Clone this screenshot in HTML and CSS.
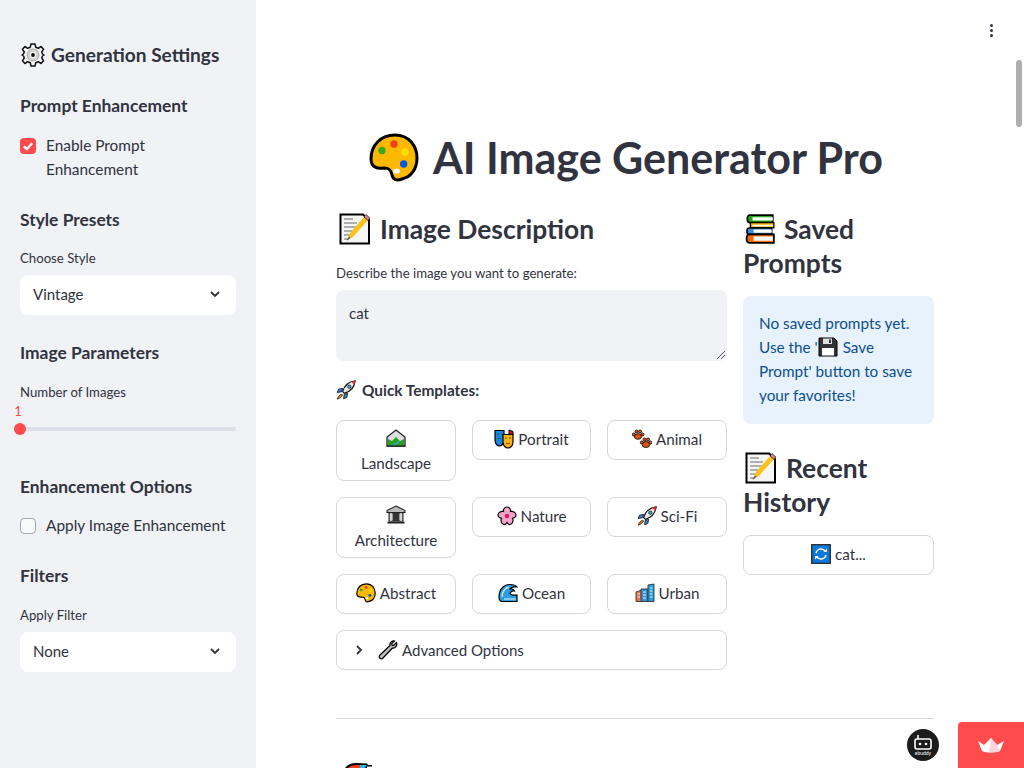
FILE: index.html
```html
<!DOCTYPE html>
<html lang="en">
<head>
<meta charset="utf-8">
<title>AI Image Generator Pro</title>
<link rel="stylesheet" href="styles.css">
</head>
<body>
<svg class="defs" width="0" height="0" aria-hidden="true">
  <symbol id="palette" viewBox="0 0 50 50">
    <path d="M2 26C2 12 12 2 26 2C40 2 48 13 48 25C48 36 42 44 33 46C28 48 24 47 23 42C22 37 20 35 15 35C8 36 2 34 2 26Z" fill="#fcb900" stroke="#000" stroke-width="3"/>
    <circle cx="25" cy="11" r="3.7" fill="#f0401a"/><circle cx="13" cy="17.5" r="3.7" fill="#3aaa1c"/><circle cx="36" cy="19" r="3.7" fill="#ffdc00"/><circle cx="34.7" cy="31" r="3.7" fill="#0a55e0"/>
    <ellipse cx="27.5" cy="38" rx="3.4" ry="2.6" fill="#fff"/>
  </symbol>
  <symbol id="memo" viewBox="0 0 32 32">
    <path d="M1.5 1.5H24L30 7V30.500H1.500Z" fill="#f6f6f6" stroke="#000" stroke-width="2"/>
    <path d="M5 6H14M5 10H18M5 14H17M5 18H13M5 22H10M5 26H8" stroke="#999" stroke-width="1.300"/>
    <path d="M8 27L11 20L25 4L29 7L14 24Z" fill="#fcc21b"/>
    <path d="M25 4L27 1.500L31 5L29 7.500Z" fill="#d9808a" stroke="#222" stroke-width=".7"/>
    <path d="M8 27L11 24" stroke="#555" stroke-width="1.500"/>
  </symbol>
  <symbol id="books" viewBox="0 0 30 30">
    <path d="M5 2H27V9H5C2.500 9 2.500 2 5 2Z" fill="#2da51a" stroke="#000" stroke-width="1.600"/><path d="M8 4H27V7H8Z" fill="#fff"/>
    <path d="M6 9H28V14H6Z" fill="#f4b400" stroke="#000" stroke-width="1.200"/><path d="M8 11H27V12.500H8Z" fill="#fff"/>
    <path d="M5 14H26V20H5C2 20 2 14 5 14Z" fill="#3c90d8" stroke="#000" stroke-width="1.400"/><path d="M9 15.500H26V18.500H9Z" fill="#fff"/>
    <path d="M5 20H28V28H5C1.500 28 1.500 20 5 20Z" fill="#f26a0c" stroke="#000" stroke-width="1.600"/><path d="M9 22H27V26H9Z" fill="#fff"/>
  </symbol>
  <symbol id="rocket" viewBox="0 0 24 24">
    <path d="M8 14C10 7 15 2 23 1C22 9 17 14 10 16Z" fill="#e8e8e8" stroke="#000" stroke-width="1.300"/>
    <path d="M18 1.700L23 1L22.300 6Z" fill="#e0251b"/>
    <circle cx="16" cy="8" r="2" fill="#4aa3df" stroke="#000" stroke-width=".8"/>
    <path d="M8 10L3 11L1.500 15L7 14ZM14 16L13 21L9 22.500L10 17Z" fill="#3f7fd0" stroke="#000" stroke-width=".9"/>
    <path d="M7 17C4 18 2.500 20 1.500 23C4.500 22 6.500 20.500 8 18Z" fill="#f57c00" stroke="#000" stroke-width=".8"/>
  </symbol>
  <symbol id="landscape" viewBox="0 0 20 20">
    <path d="M1 18V9L10 2L19 9V18Z" fill="#ddd" stroke="#222" stroke-width="1.300"/>
    <path d="M2 18V11L6 13L10 9L14 13L18 11V18Z" fill="#27a51e"/>
    <path d="M7 18C9 15 12 16 13 13" stroke="#38a6e0" stroke-width="1.600" fill="none"/>
    <path d="M1 18H19" stroke="#222" stroke-width="1.300"/>
  </symbol>
  <symbol id="masks" viewBox="0 0 20 20">
    <path d="M1 1.500H10V11C10 15 7 17 5.500 17C3.500 17 1 15 1 11Z" fill="#1d86e0" stroke="#000" stroke-width="1.200"/>
    <path d="M15 1L19 2.500V6H15Z" fill="#c2122f" stroke="#000"/>
    <path d="M9 5.500H19V13C19 16.500 16.500 19 14 19C11.500 19 9 16.500 9 13Z" fill="#f6b21a" stroke="#000" stroke-width="1.200"/>
    <path d="M11 9H13M15 9H17M12 14C13 15 15 15 16 14" stroke="#8a4a00" fill="none"/>
    <path d="M3 5H5M6.500 5H8.500M3.500 10C5 9 6 9 7.500 10" stroke="#063" fill="none" stroke-width=".8"/>
  </symbol>
  <symbol id="paws" viewBox="0 0 20 20">
    <g fill="#e0540c" stroke="#000" stroke-width=".8">
      <ellipse cx="6" cy="7.500" rx="3.600" ry="2.800"/><circle cx="1.800" cy="5.500" r="1.500"/><circle cx="4.500" cy="2.500" r="1.500"/><circle cx="8" cy="2.500" r="1.500"/><circle cx="10.500" cy="5.500" r="1.500"/>
      <ellipse cx="14" cy="15.500" rx="3.800" ry="3"/><circle cx="9.800" cy="13.500" r="1.500"/><circle cx="12.500" cy="10.500" r="1.500"/><circle cx="16" cy="10.500" r="1.500"/><circle cx="18.400" cy="13.500" r="1.500"/>
    </g>
  </symbol>
  <symbol id="bank" viewBox="0 0 20 20">
    <path d="M10 1L19 5.500V7.500H1V5.500Z" fill="#bbb" stroke="#222" stroke-width="1.100"/>
    <path d="M3 8H17V16H3Z" fill="#999" stroke="#222"/>
    <path d="M7 8H13V16H7Z" fill="#333"/>
    <path d="M5 8V16M15 8V16" stroke="#eee" stroke-width="1.400"/>
    <path d="M1.500 17.500H18.500" stroke="#222" stroke-width="2"/>
  </symbol>
  <symbol id="blossom" viewBox="0 0 20 20">
    <path d="M10 1C13 1 14 4 13.500 5.500C15.500 5 19 6 19 9C19 11.500 17 12 15.500 12.300C16.500 14 16 18 13 18.500C11.500 18.700 10.500 17.500 10 16.500C9.500 17.500 8.500 18.700 7 18.500C4 18 3.500 14 4.500 12.300C3 12 1 11.500 1 9C1 6 4.500 5 6.500 5.500C6 4 7 1 10 1Z" fill="#f6a5c8" stroke="#000" stroke-width="1.200"/>
    <circle cx="10" cy="10" r="2.200" fill="#d81b60"/>
  </symbol>
  <symbol id="wave" viewBox="0 0 20 20">
    <path d="M1 14C1 6 6 1.500 12 1.500C15 1.500 18 2.500 19 4C16 3.500 13 4 12 6C14 5.500 16 6.500 16.500 8C15 7.500 13 8.500 12 10C12 12 15 12.500 19 12V18.500H4C2 18.500 1 16.500 1 14Z" fill="#2f9ce0" stroke="#000" stroke-width="1.200"/>
    <path d="M4 14C4 9 7 5 11 4" stroke="#bfe6fa" stroke-width="1.500" fill="none"/>
    <path d="M6 16H18" stroke="#bfe6fa" stroke-width="1.200"/>
  </symbol>
  <symbol id="city" viewBox="0 0 20 20">
    <path d="M1 18.500V9L7 7V18.500Z" fill="#e8744f" stroke="#333" stroke-width=".9"/>
    <path d="M6 18.500V6H13V18.500Z" fill="#3b8fd4" stroke="#333" stroke-width=".9"/>
    <path d="M13 18.500V2L19 1V18.500Z" fill="#2b9ed8" stroke="#333" stroke-width=".9"/>
    <path d="M2.500 11H5M2.500 14H5M8 9H11M8 12H11M8 15H11M15 5H17.500M15 8H17.500M15 11H17.500M15 14H17.500" stroke="#dff1fb" stroke-width="1"/>
  </symbol>
  <symbol id="wrench" viewBox="0 0 20 20">
    <path d="M18.500 2.500L15.500 5.500L14 5L13.800 3.500L16.500 1C14 .4 11.500 2.500 12 5.500L2 15C.8 16.200 1 17.500 1.800 18.200C2.600 19 4 19 5 18L14.500 8C17.500 8.500 19.500 5.500 18.500 2.500Z" fill="#bbb" stroke="#000" stroke-width="1.200"/>
  </symbol>
  <symbol id="refresh" viewBox="0 0 20 20">
    <rect x=".7" y=".7" width="18.600" height="18.600" fill="#0c78d8" stroke="#222" stroke-width="1.200"/>
    <path d="M5 9C5.500 6.500 8 5 10 5C12 5 13.500 6 14.500 7.500M15 11C14.500 13.500 12 15 10 15C8 15 6.500 14 5.500 12.500" fill="none" stroke="#fff" stroke-width="1.500"/>
    <path d="M12.500 8H16V4.500ZM7.500 12H4V15.500Z" fill="#fff"/>
  </symbol>
  <symbol id="floppy" viewBox="0 0 20 20">
    <path d="M1 1H16L19 4V19H1Z" fill="#333" stroke="#000"/>
    <path d="M5 1.500H14V7H5Z" fill="#ddd"/><path d="M4 11H16V18.500H4Z" fill="#fff"/><path d="M11 2.500H13V6H11Z" fill="#333"/>
  </symbol>
  <symbol id="gear" viewBox="0 0 24 24">
    <path d="M10 1H14L14.700 4.200L17.300 5.300L20.100 3.500L22.500 6.300L20.700 9L21.500 11L23 12L21.500 13L20.700 15L22.500 17.700L20.100 20.500L17.300 18.700L14.700 19.800L14 23H10L9.300 19.800L6.700 18.700L3.900 20.500L1.500 17.700L3.300 15L2.500 13L1 12L2.500 11L3.300 9L1.500 6.300L3.900 3.500L6.700 5.300L9.300 4.200Z" fill="#f7f7f7" stroke="#111" stroke-width="1.500" stroke-linejoin="round"/>
    <circle cx="12" cy="12" r="6" fill="#d4d4d4" stroke="#999" stroke-width=".8"/>
    <circle cx="12" cy="12" r="3.200" fill="#f0f0f0"/>
    <circle cx="12" cy="12" r="1.900" fill="#111"/>
  </symbol>
  <symbol id="artist" viewBox="0 0 28 5">
    <path d="M0 5C3 1 7 0 12 0L22 .5L23 2L27 2V3.500H22V5Z" fill="#000"/>
    <path d="M3 5C4 3.500 7 2 15 2V5Z" fill="#f0401a"/>
    <path d="M15 2H22L20 5H15Z" fill="#29b6e8"/>
  </symbol>
  <symbol id="chevron" viewBox="0 0 12 12"><path d="M2 4L6 8L10 4" fill="none" stroke="#31333f" stroke-width="1.800"/></symbol>
</svg>

<div class="app">
  <aside class="sidebar">
    <h2 class="side-title"><svg class="ico-24"><use href="#gear"/></svg>Generation Settings</h2>

    <h3 class="side-head side-head-first">Prompt Enhancement</h3>
    <div class="check check-top">
      <span class="box box-on"><svg viewBox="0 0 16 16" width="16" height="16"><path d="M3.800 8.300L6.800 11L12.200 5.200" fill="none" stroke="#fff" stroke-width="2.400"/></svg></span>
      <span class="check-label">Enable Prompt Enhancement</span>
    </div>

    <h3 class="side-head head-style">Style Presets</h3>
    <label class="field-label label-style">Choose Style</label>
    <div class="select"><span>Vintage</span><svg class="chev"><use href="#chevron"/></svg></div>

    <h3 class="side-head head-params">Image Parameters</h3>
    <label class="field-label label-num">Number of Images</label>
    <div class="slider">
      <span class="slider-value">1</span>
      <div class="track"><span class="thumb"></span></div>
    </div>

    <h3 class="side-head head-enh">Enhancement Options</h3>
    <div class="check check-apply">
      <span class="box"></span>
      <span class="check-label">Apply Image Enhancement</span>
    </div>

    <h3 class="side-head head-filters">Filters</h3>
    <label class="field-label label-filter">Apply Filter</label>
    <div class="select"><span>None</span><svg class="chev"><use href="#chevron"/></svg></div>
  </aside>

  <main class="main">
    <h1 class="title"><svg class="ico-title"><use href="#palette"/></svg>AI Image Generator Pro</h1>

    <div class="columns">
      <section class="col-left">
        <h2 class="heading"><svg class="ico-head"><use href="#memo"/></svg>Image Description</h2>
        <label class="field-label label-desc">Describe the image you want to generate:</label>
        <div class="textarea">cat
          <svg class="grip" width="10" height="10" viewBox="0 0 10 10"><path d="M1 9L9 1M5 9L9 5" stroke="#555" stroke-width="1"/></svg>
        </div>
        <p class="quick"><svg class="ico-20"><use href="#rocket"/></svg>Quick Templates:</p>
        <div class="templates">
          <button class="btn btn-stack"><svg class="ico-20"><use href="#landscape"/></svg>Landscape</button>
          <button class="btn"><svg class="ico-20"><use href="#masks"/></svg>Portrait</button>
          <button class="btn"><svg class="ico-20"><use href="#paws"/></svg>Animal</button>
          <button class="btn btn-stack"><svg class="ico-20"><use href="#bank"/></svg>Architecture</button>
          <button class="btn"><svg class="ico-20"><use href="#blossom"/></svg>Nature</button>
          <button class="btn"><svg class="ico-20"><use href="#rocket"/></svg>Sci-Fi</button>
          <button class="btn"><svg class="ico-20"><use href="#palette"/></svg>Abstract</button>
          <button class="btn"><svg class="ico-20"><use href="#wave"/></svg>Ocean</button>
          <button class="btn"><svg class="ico-20"><use href="#city"/></svg>Urban</button>
        </div>
        <div class="expander">
          <svg class="expander-chev" width="10" height="12" viewBox="0 0 10 12"><path d="M3 2L7 6L3 10" fill="none" stroke="#31333f" stroke-width="1.800"/></svg>
          <svg class="ico-20"><use href="#wrench"/></svg>Advanced Options
        </div>
      </section>

      <section class="col-right">
        <h2 class="heading"><svg class="ico-head ico-books"><use href="#books"/></svg>Saved Prompts</h2>
        <div class="info">No saved prompts yet. Use the '<svg class="ico-inline"><use href="#floppy"/></svg>Save Prompt' button to save your favorites!</div>
        <h2 class="heading heading-history"><svg class="ico-head ico-memo-right"><use href="#memo"/></svg>Recent History</h2>
        <button class="btn btn-history"><svg class="ico-20"><use href="#refresh"/></svg>cat...</button>
      </section>
    </div>

    <hr class="rule">
    <div class="next"><svg class="ico-next"><use href="#artist"/></svg></div>
  </main>

  <button class="kebab" aria-label="Menu"><span></span><span></span><span></span></button>
  <div class="scrollbar"></div>
  <div class="bot"><svg width="18" height="16" viewBox="0 0 18 16"><path d="M4 1V5M3 5H15A2 2 0 0 1 17 7V13A2 2 0 0 1 15 15H3A2 2 0 0 1 1 13V7A2 2 0 0 1 3 5Z" fill="none" stroke="#fff" stroke-width="1.600"/><circle cx="6" cy="10" r="1.300" fill="#fff"/><circle cx="12" cy="10" r="1.300" fill="#fff"/></svg><span class="bot-name">ebuddy</span></div>
  <div class="crown-badge"><svg width="28" height="16" viewBox="0 0 28 16"><path d="M1 4L7 8L14 1L20 8L27 4L23 14C17 16 10 16 5 14Z" fill="#fff"/><path d="M14 1L20 8L23 14C19 15.500 15 15.500 12 15.300Z" fill="#ffd3d9"/></svg></div>
</div>
</body>
</html>
```

FILE: styles.css
```css
* { box-sizing: border-box; }

html, body {
  margin: 0;
  height: 100%;
  overflow: hidden;
}

body {
  font-family: "Lato", "Liberation Sans", sans-serif;
  font-size: 16px;
  line-height: 24px;
  color: #31333f;
  background: #fff;
}

.defs { position: absolute; }

.app {
  position: relative;
  display: flex;
  height: 768px;
  overflow: hidden;
}

/* sidebar */
.sidebar {
  flex: 0 0 256px;
  background: #f0f2f6;
  padding: 39px 20px 0;
}

.side-title {
  display: flex;
  align-items: center;
  gap: 6px;
  margin: 0;
  font-size: 19.100px;
  line-height: 32px;
  font-weight: 700;
}

.ico-24 { width: 24px; height: 24px; margin-left: 1px; flex: none; }

.side-head {
  margin: 0;
  font-size: 17.400px;
  line-height: 26px;
  font-weight: 700;
}

.side-head-first { margin-top: 22px; }
.head-style { margin-top: 26px; }
.head-params { margin-top: 25px; }
.head-enh { margin-top: 36px; }
.head-filters { margin-top: 26px; }

.check { display: flex; gap: 10px; }
.check-top { margin-top: 14px; }
.check-apply { margin-top: 13px; }

.box {
  flex: none;
  width: 16px;
  height: 16px;
  margin-top: 5px;
  border-radius: 4px;
  border: 1px solid #a3a8b4;
  background: #f8f9fb;
}

.box-on {
  background: #ff4b4b;
  border: 0;
}

.box svg { display: block; }

.check-label { font-size: 15.400px; }

.field-label {
  display: block;
  font-size: 13.200px;
  line-height: 20px;
}

.label-style { margin-top: 15px; margin-bottom: 7px; }
.label-num { margin-top: 16px; }
.label-filter { margin-top: 16px; margin-bottom: 7px; }

.select {
  display: flex;
  align-items: center;
  justify-content: space-between;
  height: 40px;
  padding: 0 15px 2px 13px;
  background: #fff;
  border-radius: 8px;
  font-size: 15px;
}

.chev { width: 12px; height: 12px; }

.slider { height: 34px; margin-top: 2px; position: relative; }

.slider-value {
  position: absolute;
  left: -7px;
  top: 0;
  width: 8px;
  text-align: center;
  font-size: 13px;
  line-height: 14px;
  color: #ff4b4b;
  margin-left: 1px;
}

.track {
  position: absolute;
  left: 0;
  right: 0;
  top: 23px;
  height: 4px;
  border-radius: 2px;
  background: #dcdfe8;
}

.thumb {
  position: absolute;
  left: -6px;
  top: -4px;
  width: 12px;
  height: 12px;
  border-radius: 50%;
  background: #ff4b4b;
}

/* main */
.main {
  flex: 1;
  padding: 130px 90px 0 80px;
}

.title {
  display: flex;
  align-items: center;
  justify-content: center;
  gap: 14px;
  margin: 0 18px 0 0;
  height: 56px;
  font-size: 43px;
  line-height: 56px;
  font-weight: 700;
}

.ico-title { width: 50px; height: 50px; flex: none; }

.columns {
  display: grid;
  grid-template-columns: 391px 191px;
  gap: 16px;
  margin-top: 27px;
}

.heading {
  margin: 0;
  font-size: 26.400px;
  line-height: 33.600px;
  font-weight: 700;
}

.ico-head {
  width: 34px;
  height: 32px;
  margin: 0 8px 0 2px;
  vertical-align: -6px;
}

.ico-books { margin: 0 7px 0 0; }
.ico-memo-right { margin: 0 8px 0 1px; }

.label-desc { margin-top: 16px; margin-bottom: 7px; }

.textarea {
  position: relative;
  height: 71px;
  padding: 11px 13px;
  border-radius: 8px;
  background: #f0f2f6;
  font-size: 15px;
}

.grip { position: absolute; right: 1px; bottom: 1px; }

.quick {
  display: flex;
  align-items: center;
  gap: 6px;
  margin: 17px 0 18px;
  font-size: 15.400px;
  font-weight: 700;
}

.ico-20 { width: 20px; height: 20px; flex: none; }

.templates {
  display: grid;
  grid-template-columns: 120px 119px 120px;
  gap: 16px;
  align-items: start;
}

.btn {
  display: flex;
  align-items: center;
  justify-content: center;
  gap: 4px;
  width: 100%;
  min-height: 40px;
  padding: 5px 12px 7px;
  border: 1px solid #d5d6d9;
  border-radius: 8px;
  background: #fff;
  color: #31333f;
  font: inherit;
  font-size: 15.200px;
}

.btn-stack {
  flex-direction: column;
  height: 61px;
  gap: 3px;
  padding: 7px 4px 5px;
}

.expander {
  display: flex;
  align-items: center;
  height: 40px;
  margin-top: 16px;
  padding: 0 17px;
  border: 1px solid #d5d6d9;
  border-radius: 8px;
  font-size: 15px;
}

.expander-chev { margin-right: 14px; flex: none; }
.expander .ico-20 { margin-right: 4px; }

.info {
  margin-top: 16px;
  padding: 15px 16px 17px;
  border-radius: 8px;
  background: #e8f2fc;
  color: #0a4f92;
  font-size: 15.300px;
}

.ico-inline {
  width: 20px;
  height: 20px;
  margin: 0 5px 0 0;
  vertical-align: -4px;
}

.heading-history { margin-top: 28px; }
.btn-history { margin-top: 15.600px; }

.rule {
  height: 1px;
  margin: 48px 0 0;
  border: 0;
  background: #d5d6d9;
}

.next { margin-top: 44px; margin-left: 9px; }

.ico-next { display: block; width: 28px; height: 5px; }

/* overlays */
.kebab {
  position: absolute;
  top: 24px;
  left: 990px;
  display: flex;
  flex-direction: column;
  gap: 2px;
  padding: 0;
  border: 0;
  background: none;
}

.kebab span {
  width: 3px;
  height: 3px;
  border-radius: 50%;
  background: #31333f;
}

.scrollbar {
  position: absolute;
  left: 1016px;
  top: 60px;
  width: 6px;
  height: 67px;
  border-radius: 3px;
  background: #aeaeb3;
}

.bot {
  position: absolute;
  left: 907px;
  top: 729px;
  display: flex;
  flex-direction: column;
  align-items: center;
  width: 32px;
  height: 32px;
  padding-top: 5px;
  border-radius: 50%;
  background: #1c1c1c;
}

.bot-name {
  font-size: 5px;
  line-height: 6px;
  color: #fff;
}

.crown-badge {
  position: absolute;
  left: 958px;
  top: 722px;
  display: flex;
  align-items: center;
  justify-content: center;
  width: 66px;
  height: 46px;
  border-top-left-radius: 4px;
  background: #ff4b4b;
}
```
